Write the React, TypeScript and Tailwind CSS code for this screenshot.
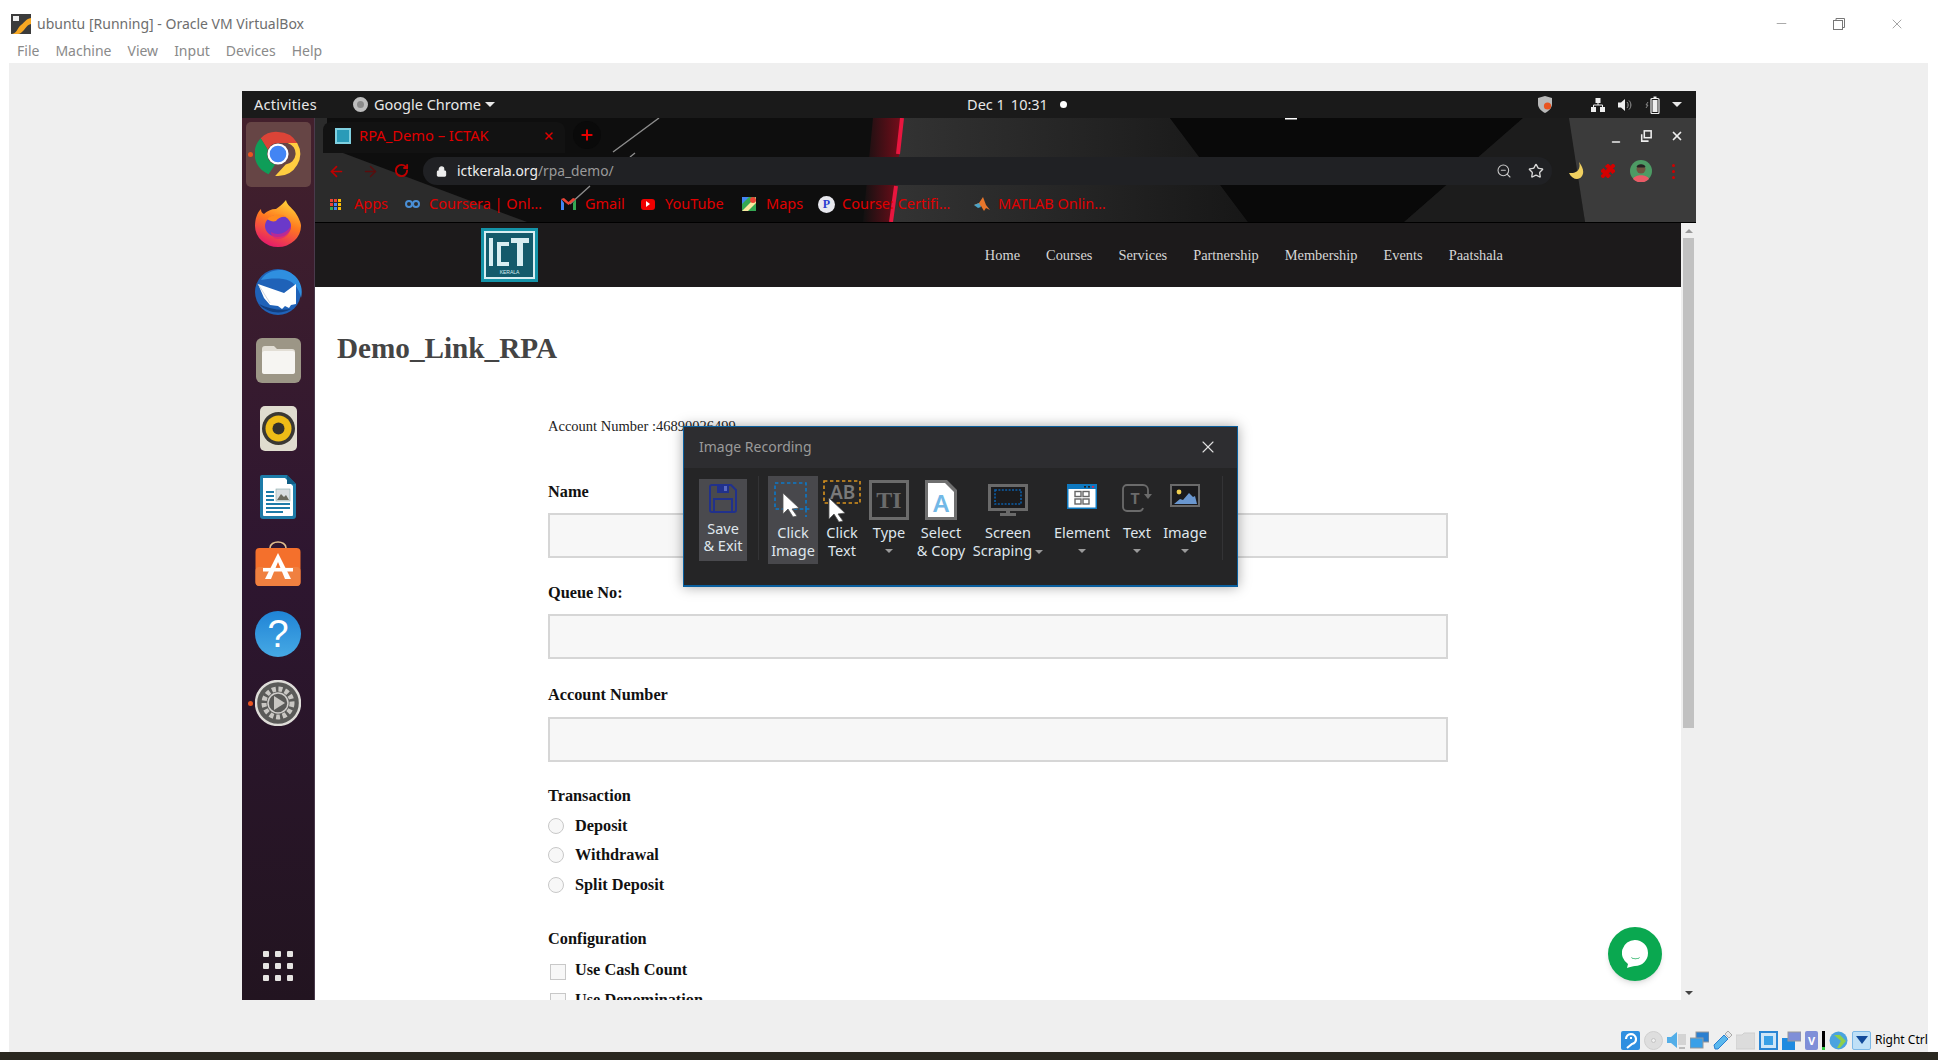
import { ArrowLeft, ArrowRight, Lock, Minus, Plus, Puzzle, RotateCw, Star, X, ZoomOut } from "lucide-react";

const uiFont = "font-['Noto_Sans','Open_Sans',sans-serif]";
const serif = "font-['Liberation_Serif',serif]";

function ChromeIcon({ size = 46 }: { size?: number }) {
  return (
    <svg width={size} height={size} viewBox="0 0 48 48">
      <path d="M24 1a23 23 0 0 1 20 11.5H24a11.5 11.5 0 0 0-10.6 7L6 7.5A23 23 0 0 1 24 1z" fill="#db4437" />
      <path d="M6 7.500 13.400 19.500a11.500 11.500 0 0 0 7.600 15.500L14.200 45A23 23 0 0 1 6 7.500z" fill="#0f9d58" />
      <path d="M44 12.500A23 23 0 0 1 24 47h-3l11-12a11.500 11.500 0 0 0 2-22.500z" fill="#ffcd40" />
      <circle cx="24" cy="24" r="11" fill="#fff" />
      <circle cx="24" cy="24" r="8.700" fill="#4285f4" />
    </svg>
  );
}

function FirefoxIcon() {
  return (
    <svg width="46" height="48" viewBox="0 0 46 48">
      <defs>
        <linearGradient id="ff1" x1="0.7" y1="0" x2="0.3" y2="1">
          <stop offset="0" stopColor="#ffd53a" />
          <stop offset="0.45" stopColor="#ff7a1f" />
          <stop offset="1" stopColor="#e3166e" />
        </linearGradient>
      </defs>
      <path d="M31 1c1 5 5 7 9 12 4 6 6 11 6 14a23 21 0 0 1-46 0c0-7 2-13 6-17 0 3 1 4 3 5 3-3 7-5 12-5 3-2 7-5 10-9z" fill="url(#ff1)" />
      <ellipse cx="23" cy="27" rx="13" ry="11" fill="#6b39c9" />
      <path d="M12 20c5-5 13-6 20-2-5-1-9 1-11 4-3 1-6 0-9-2z" fill="#ff8a1f" />
      <path d="M16 33c6 4 15 2 20-6 0 7-6 13-13 13-4 0-7-3-7-7z" fill="#d9247f" opacity="0.7" />
    </svg>
  );
}

function ThunderbirdIcon() {
  return (
    <svg width="50" height="50" viewBox="0 0 50 50">
      <circle cx="25" cy="26" r="23" fill="#1f62b8" />
      <path d="M8 14C14 3 32 0 42 10c6 6 8 14 6 22-2-10-8-18-18-19-9-1-16 0-22 1z" fill="#2f8fe0" />
      <path d="M5 18l26 9 12-9v20l-5 1-2 3-4-2-3 3-4-3-8-1-6-7z" fill="#fff" />
      <path d="M5 18l12 19" stroke="#c8ccd2" strokeWidth="0.8" fill="none" />
      <path d="M6 38c8 9 22 11 32 5-10 2-22 0-32-5z" fill="#123f80" />
    </svg>
  );
}

function FilesIcon() {
  return (
    <div className="w-[45px] h-[45px] rounded-[6px] bg-[#9c9686] flex items-center justify-center">
      <svg width="33" height="28" viewBox="0 0 33 28">
        <path d="M0 3a3 3 0 0 1 3-3h9l3 3h15a3 3 0 0 1 3 3v19a3 3 0 0 1-3 3H3a3 3 0 0 1-3-3z" fill="#e2ded5" />
        <rect x="0" y="5" width="33" height="23" rx="2.500" fill="#f6f5f2" />
      </svg>
    </div>
  );
}

function RhythmboxIcon() {
  return (
    <div className="w-[37px] h-[45px] rounded-[5px] bg-[#e0dccf] flex items-center justify-center">
      <svg width="33" height="33" viewBox="0 0 33 33">
        <circle cx="16.500" cy="16.500" r="16.500" fill="#3a3833" />
        <circle cx="16.500" cy="16.500" r="13" fill="#eebc17" />
        <circle cx="16.500" cy="16.500" r="6" fill="#33312c" />
      </svg>
    </div>
  );
}

function WriterIcon() {
  return (
    <svg width="38" height="46" viewBox="0 0 38 46">
      <path d="M3 1h25l9 9v32a3 3 0 0 1-3 3H4a3 3 0 0 1-3-3V3a2 2 0 0 1 2-2z" fill="#1d7ba8" />
      <path d="M4 4h22l8 8v29a1 1 0 0 1-1 1H5a1 1 0 0 1-1-1z" fill="#fff" />
      <path d="M28 1l9 9h-9z" fill="#0f5d85" />
      <rect x="7" y="17" width="8" height="2" fill="#1d7ba8" />
      <rect x="7" y="21" width="8" height="2" fill="#1d7ba8" />
      <rect x="7" y="25" width="8" height="2" fill="#1d7ba8" />
      <rect x="7" y="29" width="24" height="2" fill="#1d7ba8" />
      <rect x="7" y="33" width="24" height="2" fill="#1d7ba8" />
      <rect x="7" y="37" width="17" height="2" fill="#1d7ba8" />
      <rect x="17" y="15" width="14" height="12" fill="#d8dde0" stroke="#8aa" strokeWidth="0.6" />
      <path d="M18 26l4-6 3 3 2-2 3 5z" fill="#6a6a5e" />
    </svg>
  );
}

function SoftwareIcon() {
  return (
    <svg className="-mt-[4px]" width="46" height="46" viewBox="0 0 46 46">
      <path d="M15 9V7c0-8 16-8 16 0v2" fill="none" stroke="#e0bd8c" strokeWidth="1.600" />
      <rect x="0.500" y="7" width="45" height="38" rx="4" fill="#f4702c" />
      <rect x="0.500" y="26" width="45" height="19" rx="4" fill="#f08040" />
      <path d="M23 12l13 26h-6l-7-17-7 17h-6z" fill="#fff" />
      <rect x="8" y="27" width="30" height="3.500" fill="#fff" />
    </svg>
  );
}

function HelpIcon() {
  return (
    <div className="w-[46px] h-[46px] rounded-full bg-gradient-to-b from-[#1f84d6] to-[#46a9e4] flex items-center justify-center text-white text-[38px] leading-none font-['Liberation_Sans',sans-serif]">
      ?
    </div>
  );
}

function SettingsIcon() {
  return (
    <svg width="46" height="46" viewBox="0 0 46 46">
      <circle cx="23" cy="23" r="22" fill="#5a5a58" stroke="#dedcd8" strokeWidth="2.400" />
      <circle cx="23" cy="23" r="14" fill="none" stroke="#c9c7c3" strokeWidth="5" strokeDasharray="4 2.600" />
      <circle cx="23" cy="23" r="10" fill="#5a5a58" stroke="#d0cecb" strokeWidth="1.500" />
      <path d="M19 16l11 7-11 7z" fill="#c9c7c3" />
    </svg>
  );
}

const dockIcons = [
  <ChromeIcon key="chrome" />,
  <FirefoxIcon key="firefox" />,
  <ThunderbirdIcon key="thunderbird" />,
  <FilesIcon key="files" />,
  <RhythmboxIcon key="rhythmbox" />,
  <WriterIcon key="writer" />,
  <SoftwareIcon key="software" />,
  <HelpIcon key="help" />,
  <SettingsIcon key="settings" />,
];

function Dock() {
  return (
    <div className="w-[73px] h-full shrink-0 flex flex-col items-center pt-[2px] pb-[19px] bg-gradient-to-b from-[#43202c] via-[#2e1630] to-[#221420] border-r border-[#4a3a4c]">
      {dockIcons.map((icon, i) => (
        <div key={i} className="relative w-full h-[68.6px] shrink-0 flex items-center justify-center">
          {i === 0 && <div className="absolute left-[4px] top-[2px] w-[65px] h-[65px] rounded-[5px] bg-[#664545]" />}
          {(i === 0 || i === 8) && <div className="absolute left-[6px] top-[32px] w-[5px] h-[5px] rounded-full bg-[#e95420]" />}
          <div className="relative">{icon}</div>
        </div>
      ))}
      <div className="mt-auto grid grid-cols-3 gap-[6px]">
        {Array.from({ length: 9 }).map((_, i) => (
          <div key={i} className="w-[6px] h-[6px] rounded-[1px] bg-[#e6e4e2]" />
        ))}
      </div>
    </div>
  );
}

function GnomeBar() {
  return (
    <div className={`h-[27px] shrink-0 bg-[#1a1a1a] flex items-center text-[#e8e8e8] text-[14.5px] ${uiFont}`}>
      <span className="ml-[12px] w-[99px] tracking-[0.25px]">Activities</span>
      <span className="w-[15px] h-[15px] rounded-full bg-[#8a8a8a] border-[4px] border-[#bdbdbd]" />
      <span className="ml-[6px]">Google Chrome</span>
      <span className="ml-[4px] w-0 h-0 border-x-[5px] border-x-transparent border-t-[5px] border-t-[#e8e8e8]" />
      <span className="ml-[472px]">Dec 1</span>
      <span className="ml-[6px]">10:31</span>
      <span className="ml-[12px] w-[7px] h-[7px] rounded-full bg-white" />
      <div className="ml-auto flex items-center">
        <svg width="14" height="17" viewBox="0 0 14 17">
          <path d="M7 0l7 2v6c0 4-3 7-7 9-4-2-7-5-7-9V2z" fill="#b9b9b9" />
          <circle cx="9.500" cy="10" r="3.600" fill="#e95420" />
        </svg>
        <svg className="ml-[39px]" width="14" height="14" viewBox="0 0 14 14" fill="#eee">
          <rect x="4.500" y="0" width="5" height="5" />
          <rect x="0" y="9" width="5" height="5" />
          <rect x="9" y="9" width="5" height="5" />
          <path d="M7 5v2M2.500 9V7h9v2" stroke="#eee" fill="none" />
        </svg>
        <svg className="ml-[13px]" width="14" height="14" viewBox="0 0 14 14" fill="#eee">
          <path d="M0 4.500h3L7 1v12L3 9.500H0z" />
          <path d="M9 4c1.500 1.500 1.500 4.500 0 6M11 2.500c2.500 2.500 2.500 6.500 0 9" stroke="#999" fill="none" />
        </svg>
        <svg className="ml-[13px]" width="18" height="18" viewBox="0 0 18 18">
          <path d="M3 6L1 9h2l-2 3" stroke="#888" fill="none" />
          <rect x="6" y="2.500" width="8" height="15" rx="1" fill="none" stroke="#eee" strokeWidth="1.200" />
          <rect x="7.500" y="4" width="5" height="12" fill="#eee" />
          <rect x="8.500" y="0.500" width="3" height="2" fill="#eee" />
        </svg>
        <span className="ml-[9px] mr-[14px] w-0 h-0 border-x-[5px] border-x-transparent border-t-[5px] border-t-[#e8e8e8]" />
      </div>
    </div>
  );
}

function HeaderBackdrop() {
  return (
    <svg className="absolute inset-0" width="1381" height="105" viewBox="0 0 1381 105">
      <defs>
        <linearGradient id="hdrMid" x1="0" y1="0" x2="1" y2="0">
          <stop offset="0" stopColor="#333333" />
          <stop offset="1" stopColor="#171717" />
        </linearGradient>
        <linearGradient id="hdrRed" x1="0" y1="0" x2="1" y2="0">
          <stop offset="0" stopColor="#111111" />
          <stop offset="1" stopColor="#7a0c1a" />
        </linearGradient>
      </defs>
      <rect width="1381" height="105" fill="#0e0e0e" />
      <path d="M0 0H12V29L212 104H0z" fill="#2b2b2b" />
      <path d="M586 0H855L933 104H577z" fill="url(#hdrMid)" />
      <path d="M558 0H588L577 104H548z" fill="url(#hdrRed)" />
      <path d="M587 0L583 36M581 68L576 104" stroke="#e8163f" strokeWidth="4" />
      <path d="M855 0H1208L1089 104H933z" fill="#090909" />
      <path d="M1208 0H1256L1270 104H1089z" fill="#1c1c1c" />
      <path d="M1254 0H1381V104H1270z" fill="#3b3b3b" />
      <path d="M344 0L298 34M320 35L315 39M275 68L255 86" stroke="#8c8c8c" strokeWidth="1.400" />
      <rect x="970" y="0" width="12" height="1.500" fill="#fff" />
      <rect y="104" width="1381" height="1" fill="#000" />
    </svg>
  );
}

function Bookmark({ width, icon, label }: { width: number; icon: React.ReactNode; label: string }) {
  return (
    <div className="flex items-center shrink-0" style={{ width }}>
      <span className="w-[24px] flex items-center">{icon}</span>
      <span>{label}</span>
    </div>
  );
}

function ChromeHeader() {
  return (
    <div className={`relative h-[105px] shrink-0 overflow-hidden ${uiFont}`}>
      <HeaderBackdrop />
      <div className="relative flex flex-col">
        {/* tabs */}
        <div className="h-[35px] flex items-end pl-[8px]">
          <div className="w-[242px] h-[31px] rounded-t-[8px] bg-[#121212] flex items-center pl-[12px] pr-[10px] pb-[4px] text-[#e00000] text-[14.7px]">
            <div className="w-[16px] h-[16px] bg-[#2a9bb8] border-[2px] border-[#7fd0e0] mr-[8px]" />
            <span>RPA_Demo – ICTAK</span>
            <X className="ml-auto" size={12} strokeWidth={3} />
          </div>
          <div className="ml-[8px] mb-[4px] w-[28px] h-[28px] rounded-full bg-[#0a0a0a] flex items-center justify-center text-[#e60000]">
            <Plus size={16} strokeWidth={3} />
          </div>
          <Minus className="ml-auto mr-[18px] mb-[5px] text-[#eee]" size={12} strokeWidth={3} />
          <svg className="mr-[18px] mb-[11px]" width="12" height="12" viewBox="0 0 14 14" fill="none" stroke="#eee" strokeWidth="1.800">
            <rect x="5" y="1" width="8" height="8" />
            <path d="M2 5v8h8" />
          </svg>
          <X className="mr-[12px] mb-[10px] text-[#eee]" size={14} strokeWidth={3} />
        </div>
        {/* address row */}
        <div className="h-[37px] pt-[4px] flex items-start">
          <ArrowLeft className="ml-[13px] mt-[6px] text-[#c00000]" size={17} strokeWidth={2.4} />
          <ArrowRight className="ml-[17px] mt-[6px] text-[#5a0d0d]" size={17} strokeWidth={2} />
          <RotateCw className="ml-[15px] mt-[6px] text-[#c00000]" size={15} strokeWidth={3} />
          <div className="ml-[14px] w-[1129px] h-[28px] rounded-full bg-[#202124] flex items-center pl-[13px] pr-[8px] text-[13.8px]">
            <Lock className="text-[#eee]" size={11} fill="#eee" strokeWidth={2.4} />
            <span className="ml-[10px] text-[#eeeeee]">ictkerala.org</span>
            <span className="text-[#9a9a9a]">/rpa_demo/</span>
            <ZoomOut className="ml-auto text-[#c8c8c8]" size={16} strokeWidth={1.6} />
            <Star className="ml-[16px] text-[#d8d8d8]" size={16} strokeWidth={2} />
          </div>
          <svg className="ml-[16px] mt-[5px]" width="16" height="18" viewBox="0 0 16 18">
            <path d="M11 0c2 6-1 12-10 11 2 4 5 6 8 6 5 0 8-6 5-12-1-2-2-4-3-5z" fill="#f0d060" />
          </svg>
          <Puzzle className="ml-[16px] mt-[6px] text-[#d40000]" size={16} fill="#d40000" strokeWidth={1.5} />
          <svg className="ml-[14px] mt-[3px]" width="22" height="22" viewBox="0 0 22 22">
            <circle cx="11" cy="11" r="11" fill="#4d9b64" />
            <path d="M3 19c2-5 14-5 16 0a11 11 0 0 1-16 0z" fill="#ea5a66" />
            <circle cx="11" cy="9" r="4.500" fill="#6f5440" />
            <path d="M6.500 6.500c2-3 7-3 9 0l-1 1h-7z" fill="#222" />
          </svg>
          <div className="ml-[20px] mt-[7px] flex flex-col gap-[3px]">
            <span className="w-[3px] h-[3px] rounded-full bg-[#d00000]" />
            <span className="w-[3px] h-[3px] rounded-full bg-[#d00000]" />
            <span className="w-[3px] h-[3px] rounded-full bg-[#d00000]" />
          </div>
        </div>
        {/* bookmarks */}
        <div className="h-[28px] pl-[15px] flex items-center text-[#e00000] text-[14.5px]">
          <Bookmark
            width={75}
            label="Apps"
            icon={
              <span className="grid grid-cols-3 gap-[1px]">
                {["#ea4335", "#ea4335", "#fbbc05", "#ea4335", "#4285f4", "#fbbc05", "#34a853", "#4285f4", "#fbbc05"].map((c, i) => (
                  <span key={i} className="w-[3px] h-[3px]" style={{ backgroundColor: c }} />
                ))}
              </span>
            }
          />
          <Bookmark
            width={156}
            label="Coursera | Onl…"
            icon={
              <svg width="15" height="8" viewBox="0 0 15 8" fill="none" stroke="#4a8fd6" strokeWidth="2">
                <circle cx="4" cy="4" r="3" />
                <circle cx="11" cy="4" r="3" />
              </svg>
            }
          />
          <Bookmark
            width={80}
            label="Gmail"
            icon={
              <svg width="15" height="12" viewBox="0 0 15 12">
                <path d="M0 1v11h3V5z" fill="#4285f4" />
                <path d="M15 1v11h-3V5z" fill="#34a853" />
                <path d="M0 1l7.500 6L15 1l-3-1-4.500 4L3 0z" fill="#ea4335" />
              </svg>
            }
          />
          <Bookmark
            width={101}
            label="YouTube"
            icon={
              <span className="w-[14px] h-[11px] rounded-[3px] bg-[#f00000] flex items-center justify-center">
                <span className="w-0 h-0 border-y-[3px] border-y-transparent border-l-[4px] border-l-white" />
              </span>
            }
          />
          <Bookmark
            width={76}
            label="Maps"
            icon={
              <svg width="14" height="14" viewBox="0 0 14 14">
                <rect width="14" height="14" fill="#34a853" />
                <path d="M0 14L14 0v6L6 14z" fill="#fbe8a0" />
                <path d="M0 0h7L0 7z" fill="#4285f4" />
                <circle cx="11" cy="3" r="3" fill="#ea4335" />
              </svg>
            }
          />
          <Bookmark
            width={156}
            label="Course: Certifi…"
            icon={
              <span className={`w-[17px] h-[17px] rounded-full bg-[#e8e8ee] text-[#2a3cd0] text-[12px] leading-[17px] font-bold text-center ${serif}`}>
                P
              </span>
            }
          />
          <Bookmark
            width={140}
            label="MATLAB Onlin…"
            icon={
              <svg width="16" height="14" viewBox="0 0 16 14">
                <path d="M0 8l5-2 4-6 3 8 4 5-4-2-2 3-3-5z" fill="#e8762b" />
                <path d="M0 8l5-2 2 4-3 1z" fill="#4ba3c7" />
              </svg>
            }
          />
        </div>
      </div>
    </div>
  );
}

function SiteLogo() {
  return (
    <svg width="57" height="54" viewBox="0 0 57 54">
      <rect width="57" height="54" fill="#1493a8" />
      <rect x="3" y="3" width="51" height="48" fill="#d8eef2" />
      <rect x="5" y="5" width="47" height="44" fill="#135a6b" />
      <path d="M8 10h4v28H8zM16 14h12v4h-8v16h8v4H16zM30 10h18v5h-6v23h-6V15h-6z" fill="#d8eef2" />
      <text x="28.500" y="46" textAnchor="middle" fontSize="5" fill="#d8eef2" fontFamily="Liberation Sans">KERALA</text>
    </svg>
  );
}

function SiteNav() {
  return (
    <div className={`h-[64px] shrink-0 bg-[#1c1a1b] flex items-center pl-[166px] pr-[178px] text-[14.4px] text-[#d6d6d6] ${serif}`}>
      <SiteLogo />
      <nav className="ml-auto pt-[2px] flex items-center gap-[26px]">
        {["Home", "Courses", "Services", "Partnership", "Membership", "Events", "Paatshala"].map((item) => (
          <span key={item}>{item}</span>
        ))}
      </nav>
    </div>
  );
}

function Field({ label, top, inputTop }: { label: string; top: number; inputTop: number }) {
  return (
    <div style={{ marginTop: top }}>
      <div className="h-[20px] leading-[20px] text-[16.3px] font-bold text-[#111]">{label}</div>
      <div className="h-[45px] border-2 border-[#d6d6d6] bg-[#f7f7f7]" style={{ marginTop: inputTop }} />
    </div>
  );
}

function Choice({ label, square }: { label: string; square?: boolean }) {
  return (
    <div className="h-[29.5px] flex items-center text-[16.3px] font-bold text-[#111]">
      {square ? (
        <span className="ml-[2px] mt-[3px] w-[16px] h-[16px] border border-[#c8c8c8] bg-[#f7f7f7]" />
      ) : (
        <span className="w-[16px] h-[16px] rounded-full border border-[#c8c8c8] bg-[#f7f7f7]" />
      )}
      <span className={square ? "ml-[9px]" : "ml-[11px]"}>{label}</span>
    </div>
  );
}

function PageContent() {
  return (
    <div className={`relative flex-1 overflow-hidden bg-white ${serif}`}>
      <h1 className="mt-[44px] ml-[22px] h-[34px] leading-[34px] text-[29.2px] font-bold text-[#444]">Demo_Link_RPA</h1>
      <div className="ml-[233px] w-[900px]">
        <div className="mt-[51px] h-[20px] leading-[20px] text-[14.5px] text-[#222]">Account Number :46890026499</div>
        <Field label="Name" top={46} inputTop={11} />
        <Field label="Queue No:" top={25} inputTop={11} />
        <Field label="Account Number" top={26} inputTop={12} />
        <div className="mt-[24px] h-[20px] leading-[20px] text-[16.3px] font-bold text-[#111]">Transaction</div>
        <div className="mt-[5px]">
          <Choice label="Deposit" />
          <Choice label="Withdrawal" />
          <Choice label="Split Deposit" />
        </div>
        <div className="mt-[29px] h-[20px] leading-[20px] text-[16.3px] font-bold text-[#111]">Configuration</div>
        <div className="mt-[7px]">
          <Choice label="Use Cash Count" square />
          <Choice label="Use Denomination" square />
        </div>
      </div>
      <div className="absolute right-[19px] bottom-[19px] w-[54px] h-[54px] rounded-full bg-[#0aa850] shadow-md flex items-center justify-center">
        <svg width="26" height="28" viewBox="0 0 26 28">
          <path d="M13 0a13 13 0 0 1 0 26c-2 0-5 1-8 2l1-4A13 13 0 0 1 13 0z" fill="#fff" />
          <path d="M9 17c3 2 6 2 9 0-1 3-8 3-9 0z" fill="#0aa850" />
        </svg>
      </div>
    </div>
  );
}

function PageScrollbar() {
  return (
    <div className="w-[15px] shrink-0 bg-[#efefef] flex flex-col items-center">
      <div className="h-[15px] flex items-center justify-center">
        <span className="w-0 h-0 border-x-[4px] border-x-transparent border-b-[4px] border-b-[#9a9a9a]" />
      </div>
      <div className="w-[11px] h-[490px] bg-[#c1c1c1]" />
      <div className="mt-auto h-[15px] flex items-center justify-center">
        <span className="w-0 h-0 border-x-[4px] border-x-transparent border-t-[4px] border-t-[#444]" />
      </div>
    </div>
  );
}

function Cursor({ className }: { className: string }) {
  return (
    <svg className={className} width="19" height="25" viewBox="0 0 19 25">
      <path d="M1 1l16 15-7 1 5 7-4 1-5-8-5 5z" fill="#fff" stroke="#555" strokeWidth="0.800" />
    </svg>
  );
}

function ToolIcon({ name }: { name: string }) {
  switch (name) {
    case "click-image":
      return (
        <div className="relative w-[38px] h-[36px]">
          <svg width="38" height="36" viewBox="0 0 38 36" fill="none" stroke="#0c78c8" strokeWidth="1.600" strokeDasharray="3.400 2.600">
            <path d="M1 1h31v26H1zM20 27h18M32 27v8" />
          </svg>
          <Cursor className="absolute left-[8px] top-[10px]" />
        </div>
      );
    case "click-text":
      return (
        <div className={`relative w-[38px] h-[42px] ${uiFont}`}>
          <svg width="38" height="24" viewBox="0 0 38 24" fill="none" stroke="#d8921e" strokeWidth="1.600" strokeDasharray="3.400 2.600">
            <rect x="1" y="1" width="36" height="22" />
          </svg>
          <span className="absolute left-[7px] top-[-1px] text-[19px] leading-[26px] font-semibold text-[#7a7a7a]">AB</span>
          <Cursor className="absolute left-[5px] top-[17px]" />
        </div>
      );
    case "type":
      return (
        <div className={`w-[40px] h-[40px] border-[3px] border-[#6b6b6b] flex items-center justify-center text-[24px] leading-none font-bold text-[#6b6b6b] ${serif}`}>
          TI
        </div>
      );
    case "select":
      return (
        <svg width="32" height="40" viewBox="0 0 32 40">
          <path d="M0 0h22l10 10v30H0z" fill="#6f6f6f" />
          <path d="M3 3h17l9 9v25H3z" fill="#fff" />
          <text x="16" y="32" textAnchor="middle" fontSize="24" fontWeight="600" fill="#72b8e6" fontFamily="Noto Sans">A</text>
        </svg>
      );
    case "screen":
      return (
        <svg width="40" height="32" viewBox="0 0 40 32">
          <rect x="1.500" y="1.500" width="37" height="24" fill="#1b1b1d" stroke="#6a6a6a" strokeWidth="3" />
          <rect x="7" y="6" width="26" height="14" fill="none" stroke="#0c5ea8" strokeWidth="1.600" strokeDasharray="2 1.400" />
          <path d="M18 27h4v2h6v3H12v-3h6z" fill="#6a6a6a" />
        </svg>
      );
    case "element":
      return (
        <svg width="30" height="25" viewBox="0 0 30 25">
          <rect width="30" height="25" fill="#0e78bf" />
          <rect x="1.500" y="5" width="27" height="18.500" fill="#fff" />
          <rect x="17" y="2" width="2" height="1.600" fill="#222" />
          <rect x="21" y="2" width="2" height="1.600" fill="#222" />
          <rect x="25" y="2" width="2" height="1.600" fill="#e0234a" />
          <g fill="none" stroke="#666" strokeWidth="1.400">
            <rect x="8" y="7.500" width="6" height="5" />
            <rect x="16" y="7.500" width="6" height="5" />
            <rect x="8" y="15" width="6" height="5" />
            <rect x="16" y="15" width="6" height="5" />
          </g>
        </svg>
      );
    case "text":
      return (
        <svg width="31" height="28" viewBox="0 0 31 28">
          <path d="M21 1H5a4 4 0 0 0-4 4v18a4 4 0 0 0 4 4h12a4 4 0 0 0 4-3" fill="none" stroke="#6b6b6b" strokeWidth="1.800" />
          <path d="M21 1a5 5 0 0 1 5 5v4" fill="none" stroke="#6b6b6b" strokeWidth="1.800" />
          <path d="M22 10h8l-4 5z" fill="#6b6b6b" />
          <text x="13" y="20" textAnchor="middle" fontSize="16" fontWeight="700" fill="#6b6b6b" fontFamily="Liberation Mono">T</text>
        </svg>
      );
    case "image":
      return (
        <svg width="30" height="23" viewBox="0 0 30 23">
          <rect x="1" y="1" width="28" height="21" fill="#1b1b1d" stroke="#6a6a6a" strokeWidth="2" />
          <circle cx="9" cy="8" r="2.400" fill="#f1d04f" />
          <path d="M4 20l6-5 3 1 6-7 4 4 2-1 2 8z" fill="#6a97cf" />
        </svg>
      );
    default:
      return (
        <svg width="28" height="29" viewBox="0 0 28 29" fill="none" stroke="#21318c" strokeWidth="2">
          <path d="M1 3a2 2 0 0 1 2-2h19l5 5v20a2 2 0 0 1-2 2H3a2 2 0 0 1-2-2z" />
          <path d="M5 28V15h18v13" />
          <rect x="8" y="1" width="12" height="8" fill="#21318c" stroke="none" />
          <rect x="15" y="2" width="3" height="5" fill="#5a6abf" stroke="none" />
        </svg>
      );
  }
}

const tools = [
  { name: "click-image", w: 50, lines: ["Click", "Image"], pad: 6, boxed: true },
  { name: "click-text", w: 48, lines: ["Click", "Text"], pad: 4 },
  { name: "type", w: 46, lines: ["Type"], pad: 4, caret: true },
  { name: "select", w: 58, lines: ["Select", "& Copy"], pad: 4 },
  { name: "screen", w: 76, lines: ["Screen", "Scraping"], pad: 8, side: true },
  { name: "element", w: 72, lines: ["Element"], pad: 8, caret: true },
  { name: "text", w: 38, lines: ["Text"], pad: 8, caret: true },
  { name: "image", w: 58, lines: ["Image"], pad: 8, caret: true },
];

function Caret() {
  return <span className="block w-0 h-0 border-x-[4px] border-x-transparent border-t-[4px] border-t-[#9a9a9a]" />;
}

function RecordingDialog() {
  return (
    <div className={`absolute left-[441px] top-[335px] w-[555px] h-[161px] z-20 flex flex-col bg-[#252526] border border-[#0a5f9e] border-b-2 shadow-[0_0_12px_rgba(0,0,0,0.35)] ${uiFont}`}>
      <div className="h-[41px] shrink-0 bg-[#2d2d30] flex items-center pl-[15px] pr-[19px] pb-[2px] text-[14px] text-[#9a9a9a]">
        <span>Image Recording</span>
        <X className="ml-auto text-[#e0e0e0]" size={20} strokeWidth={1.3} />
      </div>
      <div className="flex items-start pt-[8px] text-[14.5px] leading-[18px] text-[#dfe6ec]">
        <div className="ml-[15px] mt-[3px] w-[48px] h-[82px] shrink-0 bg-[#4a4a4e] flex flex-col items-center pt-[5px]">
          <ToolIcon name="save" />
          <div className="mt-[7px] text-center leading-[17px]">
            Save
            <br />
            &amp; Exit
          </div>
        </div>
        <div className="ml-[11px] w-px h-[84px] bg-[#333335]" />
        <div className="ml-[9px] flex">
          {tools.map((t) => (
            <div
              key={t.name}
              className={`shrink-0 h-[88px] flex flex-col items-center ${t.boxed ? "bg-[#48484c]" : ""}`}
              style={{ width: t.w, paddingTop: t.pad }}
            >
              <div className="h-[42px] flex items-start justify-center" style={{ marginBottom: 46.500 - t.pad - 42 }}>
                <ToolIcon name={t.name} />
              </div>
              <div className="text-center whitespace-nowrap">
                {t.lines[0]}
                {t.lines[1] && <br />}
                {t.lines[1]}
                {t.side && <span className="inline-block ml-[3px] align-middle"><Caret /></span>}
              </div>
              {t.caret && (
                <div className="mt-[8px] flex items-center justify-center">
                  <Caret />
                </div>
              )}
            </div>
          ))}
        </div>
        <div className="ml-[8px] w-px h-[84px] bg-[#333335]" />
      </div>
    </div>
  );
}

function VmStatusBar() {
  const base = "w-[19px] h-[19px] shrink-0";
  return (
    <div className={`h-[32px] shrink-0 pt-[8px] flex items-center justify-end text-[12px] text-black ${uiFont}`}>
      <div className="flex items-center gap-[4px] mr-[4px]">
        <svg className={base} viewBox="0 0 19 19">
          <rect width="19" height="19" rx="2" fill="#2f8fe0" />
          <path d="M5 8a5 5 0 1 1 6 5l-5 4M9 7h2" fill="none" stroke="#fff" strokeWidth="2.200" />
        </svg>
        <div className={`${base} rounded-full bg-[#dedede] border border-[#cfcfcf] flex items-center justify-center`}>
          <span className="w-[5px] h-[5px] rounded-full bg-[#f0f0f0] border border-[#c4c4c4]" />
        </div>
        <svg className={base} viewBox="0 0 19 19">
          <path d="M0 6h4l6-5v16l-6-5H0z" fill="#53aee8" />
          <rect x="11" y="3" width="8" height="11" fill="#d4d4d4" />
          <rect x="12" y="16" width="6" height="2" fill="#bbb" />
        </svg>
        <svg className={base} viewBox="0 0 19 19">
          <rect x="6" y="1" width="13" height="10" fill="#2a7fd0" stroke="#999" />
          <rect x="0" y="7" width="13" height="10" fill="#39a0e8" stroke="#999" />
        </svg>
        <svg className={base} viewBox="0 0 19 19">
          <path d="M1 14L11 4l4 4-10 10H2z" fill="#5ab8ee" stroke="#2a7fd0" />
          <path d="M12 3l3-3 4 4-3 3z" fill="#e8e8e8" stroke="#aaa" />
        </svg>
        <svg className={base} viewBox="0 0 19 19">
          <path d="M0 4h6l2-2h11v16H0z" fill="#dcdcdc" stroke="#cfcfcf" />
        </svg>
        <div className={`${base} bg-[#cfe6f7] border-[2px] border-[#2b86d4] p-[3px]`}>
          <div className="w-full h-full bg-[#3aa0e6]" />
        </div>
        <svg className={base} viewBox="0 0 19 19">
          <rect x="0" y="7" width="13" height="12" fill="#1f8be0" />
          <rect x="6" y="1" width="13" height="9" fill="#7f8fd8" stroke="#999" />
        </svg>
        <div className="w-[13px] h-[19px] shrink-0 rounded-[2px] bg-[#7f8fd8] text-white text-[11px] leading-[19px] text-center font-bold">V</div>
        <div className="w-[3px] h-[19px] shrink-0 bg-black flex items-end">
          <div className="w-full h-[3px] bg-[#2ecc40]" />
        </div>
        <svg className={base} viewBox="0 0 19 19">
          <circle cx="9.500" cy="9.500" r="9" fill="#4aa3df" />
          <path d="M5 4h6l6 6-6 7H8l4-7z" fill="#8ed04a" />
        </svg>
        <div className={`${base} rounded-[2px] bg-[#bfe0f7] border border-[#7db8e6] flex items-center justify-center`}>
          <span className="w-0 h-0 border-x-[6px] border-x-transparent border-t-[8px] border-t-[#124a9a]" />
        </div>
      </div>
      <span className="w-[53px] shrink-0 whitespace-nowrap">Right Ctrl</span>
    </div>
  );
}

export default function App() {
  return (
    <div className={`w-[1938px] h-[1060px] bg-white flex flex-col overflow-hidden ${uiFont}`}>
      {/* VirtualBox title bar */}
      <div className="h-[37px] shrink-0 pt-[10px] flex items-center text-[14px] text-[#6e6e6e]">
        <svg className="ml-[11px]" width="20" height="20" viewBox="0 0 20 20">
          <rect width="20" height="20" fill="#3b3b3b" />
          <path d="M0 20c6 0 6-6 10-9s5-6 10-7v6c-4 1-5 4-8 7s-4 3-6 3z" fill="#f7a823" />
          <rect x="2" y="2" width="6" height="5" fill="#eee" />
        </svg>
        <span className="ml-[6px]">ubuntu [Running] - Oracle VM VirtualBox</span>
        <div className="ml-auto flex items-center text-[#777]">
          <Minus size={15} strokeWidth={1} />
          <svg className="ml-[44px]" width="12" height="12" viewBox="0 0 12 12" fill="none" stroke="#777">
            <rect x="0.500" y="2.500" width="9" height="9" />
            <path d="M3 2.500V.5h8.500v9H9.500" />
          </svg>
          <X className="ml-[44px] mr-[33px]" size={16} strokeWidth={1} />
        </div>
      </div>
      <div className="h-[26px] shrink-0 pt-[1px] flex items-center pl-[17px] gap-[16px] text-[14px] text-[#8a8a8a]">
        {["File", "Machine", "View", "Input", "Devices", "Help"].map((m) => (
          <span key={m}>{m}</span>
        ))}
      </div>
      {/* guest display */}
      <div className="ml-[9px] w-[1919px] h-[989px] shrink-0 bg-[#efefef] flex flex-col">
        <div className="h-[957px] shrink-0 pt-[28px] pl-[233px]">
          <div className="relative w-[1454px] h-[909px] flex flex-col overflow-hidden">
            <GnomeBar />
            <div className="flex flex-1 min-h-0">
              <Dock />
              <div className="flex-1 min-w-0 flex flex-col">
                <ChromeHeader />
                <div className="flex flex-1 min-h-0">
                  <div className="flex-1 min-w-0 flex flex-col">
                    <SiteNav />
                    <PageContent />
                  </div>
                  <PageScrollbar />
                </div>
              </div>
            </div>
            <RecordingDialog />
          </div>
        </div>
        <VmStatusBar />
      </div>
      <div className="flex-1 bg-[#2a2820]" />
    </div>
  );
}
